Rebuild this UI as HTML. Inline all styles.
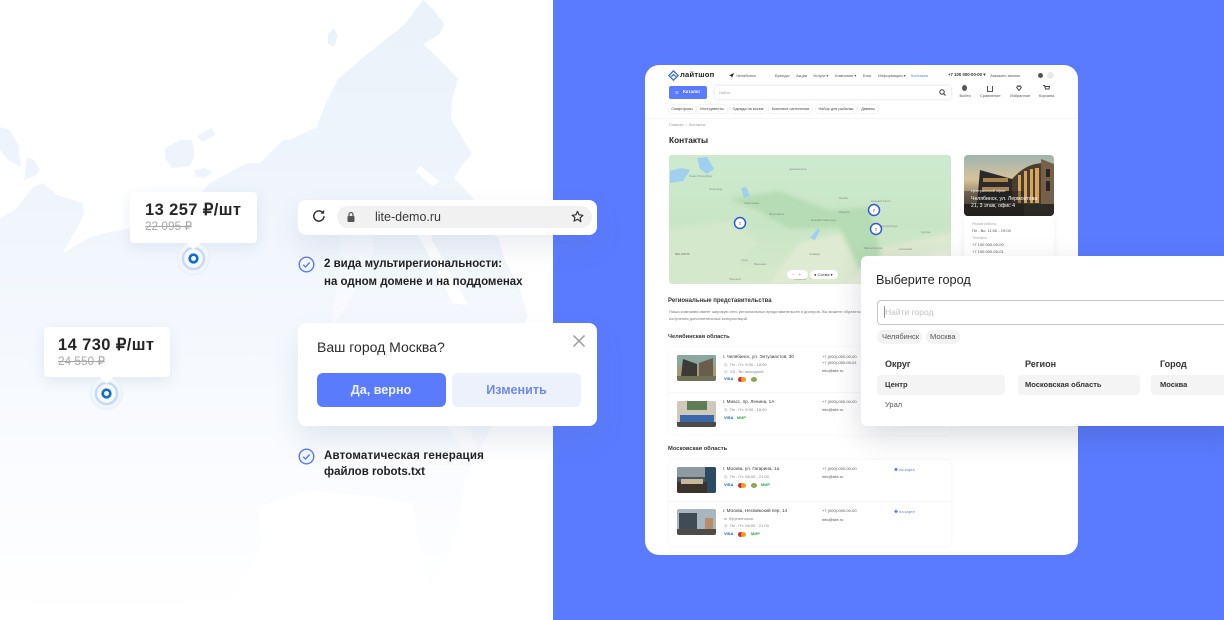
<!DOCTYPE html>
<html lang="ru"><head><meta charset="utf-8"><title>Лайтшоп</title>
<style>
html,body{margin:0;padding:0;background:#fff}
#r{position:relative;width:1224px;height:620px;overflow:hidden;background:#fff;font-family:"Liberation Sans","Noto Sans CJK SC",sans-serif;color:#1c1c1c}
#r div,#r span.t{position:absolute}
.t{white-space:nowrap;line-height:1}
.card{background:#fff;border-radius:8px}
.xs{font-size:4px;color:#555}
.s5{font-size:4.6px;color:#333}
.chip{background:#fff;border-radius:3px;box-shadow:0 0 2px rgba(0,0,0,.14);height:8px;top:105px;font-size:3.8px;line-height:8px;text-align:center;color:#444;overflow:hidden}
</style></head><body>
<div id="r">
<svg style="position:absolute;left:0;top:0" width="552" height="620" viewBox="0 0 552 620">
<defs><linearGradient id="g" gradientUnits="userSpaceOnUse" x1="0" y1="0" x2="0" y2="620">
<stop offset="0" stop-color="#eaf2fa"/><stop offset=".32" stop-color="#f0f5fc"/><stop offset=".56" stop-color="#f5f9fe"/><stop offset=".8" stop-color="#fbfcff"/><stop offset="1" stop-color="#fff"/></linearGradient></defs>
<g fill="url(#g)">
<path d="M0,218L15,210 33,187 43,183 57,195 83,203 84,213 80,223 63,253 90,237 110,232 133,228 165,215 190,205 210,183 230,172 247,163 260,163 283,140 292,139 317,127 325,105 338,79 360,60 380,44 405,24 423,0 432,8 444,24 440,34 423,44 440,60 458,79 452,100 451,119 462,137 472,154 462,165 454,178 470,195 493,222 505,260 520,290 528,317 515,340 510,400 490,430 465,480 458,530 430,594 418,540 413,503 380,498 310,490 257,507 262,540 250,570 230,600 150,610 60,612 0,600Z"/>
<path d="M0,127L10,130 18,145 21,167 8,160 0,150Z"/>
<path d="M27,157L34,160 40,170 35,176 24,180Z"/>
<path d="M165,148L180,140 192,140 195,155 190,166 172,168 165,158Z"/>
<path d="M197,136L212,128 215,135 202,142Z"/>
<path d="M194,170L204,168 213,172 205,178 196,177Z"/>
<path d="M328,34L334,28 338,36 334,47 328,44Z"/>
</g>
<g fill="#fff">
<path d="M412,200L426,205 432,240 452,275 468,305 452,303 436,268 416,232Z"/>
<path d="M470,212L490,208 515,228 508,243 482,228Z"/>
<path d="M340,238L370,232 375,250 350,300 330,330 340,270Z" opacity=".35"/>
<path d="M420,166L440,182 432,186 416,172Z"/>
<path d="M440,400L470,430 486,470 476,472 450,430 432,405Z" opacity=".7"/>
</g>
</svg>

<!-- blue panel -->
<div style="left:552.500px;top:0;width:672px;height:620px;background:#5a7bff"></div>

<!-- price tags -->
<div class="card" style="left:130px;top:192px;width:127px;height:51px;border-radius:4px;box-shadow:0 4px 14px rgba(120,140,180,.16)"></div>
<svg style="position:absolute;left:174px;top:239px" width="40" height="40"><circle cx="19.500" cy="19.500" r="16" fill="#f1f5fc" stroke="#e6eefa"/><circle cx="19.500" cy="19.500" r="10.500" fill="#f8faff" stroke="#c8daf3" stroke-width="2.500"/><circle cx="19.500" cy="19.500" r="3.800" fill="#fff" stroke="#0e6fcb" stroke-width="2.700"/></svg>
<div style="left:189px;top:239px;width:9px;height:9px;background:#fff;transform:rotate(45deg)"></div>
<span class="t" style="left:145px;top:202px;font-size:16.500px;font-weight:700;color:#262626;letter-spacing:.4px">13 257 ₽/шт</span>
<span class="t" style="left:145px;top:221px;font-size:11.800px;color:#a8a8a8;text-decoration:line-through">22 095 ₽</span>
<div class="card" style="left:44px;top:327px;width:126px;height:50px;border-radius:4px;box-shadow:0 4px 14px rgba(120,140,180,.16)"></div>
<svg style="position:absolute;left:87px;top:374px" width="40" height="40"><circle cx="19.500" cy="19.500" r="16" fill="#f1f5fc" stroke="#e6eefa"/><circle cx="19.500" cy="19.500" r="10.500" fill="#f8faff" stroke="#c8daf3" stroke-width="2.500"/><circle cx="19.500" cy="19.500" r="3.800" fill="#fff" stroke="#0e6fcb" stroke-width="2.700"/></svg>
<div style="left:102px;top:373px;width:9px;height:9px;background:#fff;transform:rotate(45deg)"></div>
<span class="t" style="left:58px;top:337px;font-size:16.500px;font-weight:700;color:#262626;letter-spacing:.4px">14 730 ₽/шт</span>
<span class="t" style="left:58px;top:356px;font-size:11.800px;color:#a8a8a8;text-decoration:line-through">24 550 ₽</span>

<!-- browser bar -->
<div class="card" style="left:298px;top:200px;width:299px;height:35px;box-shadow:0 12px 26px rgba(90,110,150,.13)"></div>
<div style="left:337px;top:206px;width:255px;height:22px;border-radius:11px;background:#f1f1f1"></div>
<svg style="position:absolute;left:311px;top:208px" width="16" height="16" viewBox="0 0 16 16" fill="none" stroke="#333" stroke-width="1.500"><path d="M13 8.200A5.100 5.100 0 1 1 11.600 4.500"/><path d="M13.200 1.800V5.600H9.400" fill="#333" stroke="none"/></svg>
<svg style="position:absolute;left:346px;top:211px" width="10" height="12" viewBox="0 0 10 12"><rect x="1.500" y="5" width="7" height="6" rx="1" fill="#555"/><path d="M3 5V3.500a2 2 0 0 1 4 0V5" fill="none" stroke="#555" stroke-width="1.200"/></svg>
<span class="t" style="left:375px;top:211px;font-size:12.500px;color:#3a3a3a">lite-demo.ru</span>
<svg style="position:absolute;left:571px;top:210px" width="13" height="13" viewBox="0 0 24 24" fill="none" stroke="#333" stroke-width="2.200" stroke-linejoin="round"><path d="M12 2.500l3 6.400 7 .9-5.100 4.800 1.300 6.900L12 17.100l-6.200 3.400 1.300-6.900L2 9.800l7-.9z"/></svg>

<!-- bullets -->
<svg style="position:absolute;left:298px;top:256px" width="17" height="17" viewBox="0 0 17 17" fill="none" stroke="#5a7bf0" stroke-width="1.400"><circle cx="8.500" cy="8.500" r="7.300" fill="#f2f6ff"/><path d="M5.200 8.700l2.300 2.300 4.200-4.500"/></svg>
<span class="t" style="left:324px;top:259px;font-size:11.500px;font-weight:700;color:#222">2 вида мультирегиональности:</span>
<span class="t" style="left:324px;top:277px;font-size:11.500px;font-weight:700;color:#222">на одном домене и на поддоменах</span>
<svg style="position:absolute;left:298px;top:448px" width="17" height="17" viewBox="0 0 17 17" fill="none" stroke="#5a7bf0" stroke-width="1.400"><circle cx="8.500" cy="8.500" r="7.300" fill="#f2f6ff"/><path d="M5.200 8.700l2.300 2.300 4.200-4.500"/></svg>
<span class="t" style="left:324px;top:451px;font-size:11.500px;font-weight:700;color:#222;letter-spacing:.2px">Автоматическая генерация</span>
<span class="t" style="left:324px;top:467px;font-size:11.500px;font-weight:700;color:#222">файлов robots.txt</span>

<!-- city question -->
<div class="card" style="left:298px;top:323px;width:299px;height:103px;box-shadow:0 14px 28px rgba(90,110,150,.14)"></div>
<span class="t" style="left:317px;top:340px;font-size:14px;color:#2b2b2b">Ваш город Москва?</span>
<svg style="position:absolute;left:572px;top:334px" width="14" height="14" fill="none" stroke="#999" stroke-width="1.500"><path d="M1.500 1.500l11 11M12.500 1.500l-11 11"/></svg>
<div style="left:317px;top:373px;width:128.500px;height:34px;border-radius:6px;background:#5a7bfb"></div>
<span class="t" style="left:317px;top:383.500px;width:128px;text-align:center;font-size:12.600px;font-weight:700;color:#eef2ff">Да, верно</span>
<div style="left:452px;top:373px;width:129px;height:34px;border-radius:6px;background:#edf1fc"></div>
<span class="t" style="left:452px;top:383.500px;width:129px;text-align:center;font-size:12.600px;font-weight:700;color:#6f8ae2">Изменить</span>

<!-- screenshot card -->
<div style="left:645px;top:65px;width:433px;height:490px;background:#fff;border-radius:14px;overflow:hidden;filter:blur(.3px)">
<div style="left:-645px;top:-65px;width:1224px;height:620px">
<!-- header -->
<svg style="position:absolute;left:668px;top:70px" width="11" height="11" viewBox="0 0 11 11" fill="none" stroke="#3f6fd8" stroke-width="1.300"><path d="M5.500.8L10.200 5.500 5.500 10.200.8 5.500Z"/><path d="M3.300 6.500L5.500 4.500 7.700 6.500"/></svg>
<span class="t" style="left:680px;top:71px;font-size:7.600px;font-weight:700;color:#222;letter-spacing:.2px">лайтшоп</span>
<svg style="position:absolute;left:729px;top:72.500px" width="5" height="5"><path d="M0 2.500L5 0 3 5 2.300 3Z" fill="#222"/></svg>
<span class="t xs" style="left:736px;top:73.500px">Челябинск</span>
<span class="t xs" style="left:775px;top:73.500px">Бренды</span><span class="t xs" style="left:796px;top:73.500px">Акции</span><span class="t xs" style="left:813px;top:73.500px">Услуги ▾</span><span class="t xs" style="left:835px;top:73.500px">Компания ▾</span><span class="t xs" style="left:863px;top:73.500px">Блог</span><span class="t xs" style="left:878px;top:73.500px">Информация ▾</span><span class="t xs" style="left:911px;top:73.500px;color:#5a7bff">Контакты</span>
<span class="t" style="left:948px;top:73px;font-size:4.300px;font-weight:700;color:#333">+7 100 000-00-00 ▾</span><span class="t xs" style="left:990px;top:73.500px">Заказать звонок</span>
<div style="left:1038px;top:73px;width:5px;height:5px;border-radius:50%;background:#555"></div>
<div style="left:1047px;top:72px;width:7px;height:7px;border-radius:50%;background:#e9e9e9"></div>
<div style="left:669px;top:86px;width:38px;height:13px;background:#5a7bff;border-radius:2px"></div>
<span class="t" style="left:675px;top:90.500px;font-size:4px;color:#fff">☰</span><span class="t" style="left:683px;top:90px;font-size:4.500px;color:#fff;font-weight:700">Каталог</span>
<div style="left:715px;top:86px;width:236px;height:13px;border-radius:2px;box-shadow:0 0 3px rgba(0,0,0,.15)"></div>
<span class="t xs" style="left:719px;top:90.500px;color:#aaa">Найти</span>
<svg style="position:absolute;left:939px;top:89px" width="7" height="7" fill="none" stroke="#333"><circle cx="3" cy="3" r="2.200"/><path d="M4.700 4.700L6.500 6.500"/></svg>
<div style="left:962px;top:85px;width:5px;height:6px;border-radius:50%;background:#555"></div>
<div style="left:987px;top:86px;width:4px;height:5px;border:1px solid #555;border-width:0 1px 1px 1px"></div>
<svg style="position:absolute;left:1016px;top:85px" width="6" height="6" fill="none" stroke="#444"><path d="M3 5.500L.7 2.500 1.700 .8 3 1.500 4.300 .8 5.300 2.500Z"/></svg>
<svg style="position:absolute;left:1043px;top:85px" width="7" height="6" fill="none" stroke="#444"><path d="M0 .5H1.500L2.500 4H6L6.500 1.500H2"/></svg>
<span class="t xs" style="left:959.500px;top:94px">Войти</span><span class="t xs" style="left:980px;top:94px">Сравнение</span><span class="t xs" style="left:1010px;top:94px">Избранное</span><span class="t xs" style="left:1039px;top:94px">Корзина</span>
<div class="chip" style="left:669px;width:26px">Смартфоны</div><div class="chip" style="left:697px;width:30px">Инструменты</div><div class="chip" style="left:730px;width:36px">Одежда на восем</div><div class="chip" style="left:769px;width:43px">Комплект сантехники</div><div class="chip" style="left:816px;width:40px">Набор для рыбалки</div><div class="chip" style="left:858px;width:20px">Диваны</div>
<div style="left:645px;top:118px;width:433px;height:1px;background:#f5f5f5"></div>
<span class="t" style="left:669px;top:124px;font-size:3.800px;color:#999">Главная &nbsp;›&nbsp; Контакты</span>
<span class="t" style="left:669px;top:136px;font-size:8.300px;font-weight:700;color:#222">Контакты</span>

<!-- map -->
<svg style="position:absolute;left:669px;top:155px;border-radius:3px" width="282" height="129" viewBox="0 0 282 129">
<defs><linearGradient id="m" x1="0" y1="0" x2="0" y2="1"><stop offset="0" stop-color="#cdeacf"/><stop offset=".55" stop-color="#c8e6c5"/><stop offset="1" stop-color="#d8e8cc"/></linearGradient><filter id="f"><feGaussianBlur stdDeviation="2.500"/></filter></defs>
<rect width="282" height="129" fill="url(#m)"/>
<g filter="url(#f)">
<path d="M100,129L130,88 180,76 215,92 282,78V129Z" fill="#dfead2"/>
<path d="M175,129L205,112 282,95V129Z" fill="#ecefdf"/>
<path d="M60,44L110,36 160,55 200,52 212,100 190,115 170,72 120,74 90,56Z" fill="#b5dcb4"/>
<path d="M0,74L60,66 90,88 60,120 0,129Z" fill="#d4e8cc"/>
</g>
<g fill="#a0cff0">
<path d="M28,3L38,2 45,14 38,19 31,14Z"/>
<path d="M1,16L12,13 21,15 14,26 1,28Z"/>
<path d="M72,33L77,32 81,41 75,43Z"/>
<path d="M141,83L149,73 151,75 146,85Z"/>
</g>
<g fill="#666" fill-opacity=".7" font-size="3" font-family="Liberation Sans,sans-serif">
<text x="20" y="22">Санкт-Петербург</text><text x="40" y="35">Новгород</text><text x="75" y="49">Череповец</text><text x="202" y="47">Нижний Тагил</text><text x="170" y="44">Пермь</text><text x="6" y="100" font-weight="700">BELARUS</text><text x="100" y="60">Ярославль</text><text x="142" y="66">Нижний Новгород</text><text x="72" y="106">Тула</text><text x="170" y="58">Ижевск</text><text x="210" y="72">Екатеринбург</text><text x="252" y="78">Курган</text><text x="195" y="94">Магнитогорск</text><text x="230" y="95">Костанай</text><text x="140" y="100">Самара</text><text x="85" y="110">Воронеж</text><text x="60" y="125">Харьков</text><text x="125" y="125">Саратов</text><text x="120" y="15">Архангельск</text></g>
</svg>
<svg style="position:absolute;left:732px;top:215px" width="16" height="16"><circle cx="8" cy="8" r="5.500" fill="#fff" stroke="#2f58d8" stroke-width="1.500"/><text x="8" y="9.500" font-size="4" text-anchor="middle" fill="#333">2</text></svg>
<svg style="position:absolute;left:866px;top:202px" width="16" height="16"><circle cx="8" cy="8" r="5.500" fill="#fff" stroke="#2f58d8" stroke-width="1.500"/><text x="8" y="9.500" font-size="4" text-anchor="middle" fill="#333">2</text></svg>
<svg style="position:absolute;left:868px;top:221px" width="16" height="16"><circle cx="8" cy="8" r="5.500" fill="#fff" stroke="#2f58d8" stroke-width="1.500"/><text x="8" y="9.500" font-size="4" text-anchor="middle" fill="#333">2</text></svg>
<div style="left:787px;top:270px;width:21px;height:9px;border-radius:5px;background:#fff"></div>
<span class="t xs" style="left:792px;top:272.500px">−&nbsp;&nbsp;&nbsp;&nbsp;+</span>
<div style="left:810px;top:270px;width:28px;height:9px;border-radius:5px;background:#fff"></div>
<span class="t xs" style="left:814px;top:272.500px;color:#333">● Схема ▾</span>

<!-- side office -->
<svg style="position:absolute;left:964px;top:155px;border-radius:4px" width="90" height="61" viewBox="0 0 90 61">
<defs><linearGradient id="sk" x1="0" y1="0" x2="0" y2="1"><stop offset="0" stop-color="#9fb4b0"/><stop offset=".4" stop-color="#d6c39a"/><stop offset=".7" stop-color="#8a7a5f"/><stop offset="1" stop-color="#3a3a30"/></linearGradient></defs>
<rect width="90" height="61" fill="url(#sk)"/>
<path d="M16,15L48,24V48H13Z" fill="#2c2a2c"/>
<path d="M48,24L52,20C60,12 68,9 78,8V50H48Z" fill="#4a3d2e"/>
<path d="M77,4L90,9V50H77Z" fill="#75604c"/>
<g fill="#d6a45a"><rect x="19" y="23" width="25" height="4" opacity=".75"/><rect x="18" y="32" width="27" height="4" opacity=".75"/><rect x="54" y="20" width="3" height="28"/><rect x="60" y="16" width="3" height="32"/><rect x="66" y="14" width="3" height="34"/><rect x="71" y="13" width="4" height="35"/></g>
<g fill="#2b2622"><rect x="82" y="14" width="4" height="8"/><rect x="82" y="26" width="4" height="10"/></g>
<rect y="49" width="90" height="12" fill="#2b2a24"/>
<path d="M0,36H60V61H0Z" fill="#141414" opacity=".35"/>
</svg>
<span class="t" style="left:971px;top:190px;font-size:3.800px;color:#eee">Центральный офис</span>
<span class="t" style="left:971px;top:197px;font-size:5.200px;color:#fff">Челябинск, ул. Лермонтова</span>
<span class="t" style="left:971px;top:204px;font-size:5.200px;color:#fff">21, 3 этаж, офис 4</span>
<div style="left:964px;top:216px;width:90px;height:50px;box-shadow:0 2px 6px rgba(0,0,0,.07)"></div>
<span class="t" style="left:972px;top:223px;font-size:3.600px;color:#aaa">Режим работы</span>
<span class="t xs" style="left:972px;top:229px">Пн - Вс: 11:00 - 19:00</span>
<span class="t" style="left:972px;top:237px;font-size:3.600px;color:#aaa">Телефон</span>
<span class="t xs" style="left:972px;top:243px">+7 100 000-00-00</span>
<span class="t xs" style="left:972px;top:250px">+7 100 000-00-01</span>

<!-- regions -->
<span class="t" style="left:668px;top:298px;font-size:6px;font-weight:700;color:#333">Региональные представительства</span>
<span class="t" style="left:669px;top:309.500px;font-size:4px;color:#777">Наша компания имеет широкую сеть региональных представительств и дилеров. Вы можете обратиться в любой из них для</span>
<span class="t" style="left:669px;top:317px;font-size:4px;color:#777">получения дополнительных консультаций.</span>
<span class="t" style="left:668px;top:335px;font-size:5.700px;font-weight:700;color:#333">Челябинская область</span>
<div style="left:669px;top:347px;width:282px;height:88px;box-shadow:0 0 3px rgba(0,0,0,.05);border-radius:3px"></div>
<div style="left:669px;top:392px;width:282px;height:1px;background:#f6f6f6"></div>

<svg style="position:absolute;left:677px;top:355px;border-radius:2px" width="39" height="26"><rect width="39" height="26" fill="#a49a7c"/><rect width="39" height="11" fill="#8aa7a0"/><path d="M6,4L20,9V22H4Z" fill="#3b3a36"/><path d="M22,8L36,3V22H22Z" fill="#6b5d4c"/><rect y="21" width="39" height="5" fill="#6f7256"/></svg>
<span class="t s5" style="left:723px;top:355px">г. Челябинск, ул. Энтузиастов, 30</span>
<span class="t xs" style="left:724px;top:363px;color:#888">◷&nbsp; Пн - Пт: 9:00 - 18:00</span>
<span class="t xs" style="left:724px;top:369.500px;color:#888">◷&nbsp; Сб - Вс: выходной</span>
<span class="t" style="left:724px;top:377px;font-size:4px;font-weight:700;color:#1a5fb4">VISA</span>
<div style="left:738px;top:377px;width:5px;height:5px;border-radius:50%;background:#e0262c"></div><div style="left:741px;top:377px;width:5px;height:5px;border-radius:50%;background:#f49f1c"></div>
<div style="left:751px;top:377px;width:6px;height:5px;border-radius:50%;background:#8da84e"></div>
<span class="t xs" style="left:822px;top:355px">+7 (000)-000-00-00</span><span class="t xs" style="left:822px;top:360.500px">+7 (000)-000-00-01</span><span class="t xs" style="left:822px;top:369px">info@site.ru</span>

<svg style="position:absolute;left:677px;top:401px;border-radius:2px" width="39" height="26"><rect width="39" height="26" fill="#cfc9bd"/><rect x="10" y="0" width="20" height="9" fill="#5f7d52"/><rect x="3" y="14" width="34" height="8" fill="#3a68a8"/><rect y="21" width="39" height="5" fill="#4a4a4a"/></svg>
<span class="t s5" style="left:723px;top:399.500px">г. Миасс, пр. Ленина, 1А</span>
<span class="t xs" style="left:724px;top:407.500px;color:#888">◷&nbsp; Пн - Пт: 9:00 - 18:00</span>
<span class="t" style="left:724px;top:416px;font-size:4px;font-weight:700;color:#1a5fb4">VISA</span><span class="t" style="left:737px;top:416px;font-size:4px;font-weight:700;color:#2ba14b">МИР</span>
<span class="t xs" style="left:822px;top:400px">+7 (000)-000-00-00</span><span class="t xs" style="left:822px;top:408px">info@site.ru</span>

<span class="t" style="left:668px;top:447px;font-size:5.800px;font-weight:700;color:#333">Московская область</span>
<div style="left:669px;top:460px;width:282px;height:86px;box-shadow:0 0 3px rgba(0,0,0,.06);border-radius:3px"></div>
<div style="left:669px;top:501px;width:282px;height:1px;background:#f6f6f6"></div>

<svg style="position:absolute;left:677px;top:467px;border-radius:2px" width="39" height="26"><rect width="39" height="26" fill="#4a5660"/><rect x="0" y="0" width="28" height="10" fill="#8d9aa0"/><rect x="28" width="11" height="26" fill="#2d4a63"/><rect y="15" width="30" height="11" fill="#3a332b"/><rect x="4" y="12" width="22" height="5" fill="#c8b79b"/></svg>
<span class="t s5" style="left:723px;top:467px">г. Москва, ул. Гагарина, 1а</span>
<span class="t xs" style="left:724px;top:475px;color:#888">◷&nbsp; Пн - Пт: 08:00 - 21:00</span>
<span class="t" style="left:724px;top:483px;font-size:4px;font-weight:700;color:#1a5fb4">VISA</span>
<div style="left:738px;top:483px;width:5px;height:5px;border-radius:50%;background:#e0262c"></div><div style="left:741px;top:483px;width:5px;height:5px;border-radius:50%;background:#f49f1c"></div>
<div style="left:751px;top:483px;width:6px;height:5px;border-radius:50%;background:#8da84e"></div>
<span class="t" style="left:761px;top:483px;font-size:4px;font-weight:700;color:#2ba14b">МИР</span>
<span class="t xs" style="left:822px;top:467px">+7 (000)-000-00-00</span><span class="t xs" style="left:822px;top:475px">info@site.ru</span>
<span class="t xs" style="left:894px;top:468px;color:#5a7bff">◆ на карте</span>

<svg style="position:absolute;left:677px;top:509px;border-radius:2px" width="39" height="26"><rect width="39" height="26" fill="#a9b6c0"/><rect x="2" y="4" width="18" height="17" fill="#3f4c55"/><rect x="28" y="9" width="8" height="12" fill="#b78d6a"/><rect y="20" width="39" height="6" fill="#4d4c48"/></svg>
<span class="t s5" style="left:723px;top:509px">г. Москва, Несвижский пер, 14</span>
<span class="t xs" style="left:724px;top:517px;color:#888">м&nbsp; Фрунзенская</span>
<span class="t xs" style="left:724px;top:524px;color:#888">◷&nbsp; Пн - Пт: 08:00 - 21:00</span>
<span class="t" style="left:724px;top:532px;font-size:4px;font-weight:700;color:#1a5fb4">VISA</span>
<div style="left:738px;top:532px;width:5px;height:5px;border-radius:50%;background:#e0262c"></div><div style="left:741px;top:532px;width:5px;height:5px;border-radius:50%;background:#f49f1c"></div>
<span class="t" style="left:751px;top:532px;font-size:4px;font-weight:700;color:#2ba14b">МИР</span>
<span class="t xs" style="left:822px;top:509px">+7 (000)-000-00-00</span><span class="t xs" style="left:822px;top:518px">info@site.ru</span>
<span class="t xs" style="left:894px;top:510px;color:#5a7bff">◆ на карте</span>
</div></div>

<!-- modal -->
<div style="left:861px;top:256px;width:380px;height:170px;background:#fff;border-radius:6px;box-shadow:0 10px 30px rgba(40,50,70,.18)"></div>
<span class="t" style="left:876px;top:274px;font-size:12.700px;color:#262626">Выберите город</span>
<div style="left:877px;top:300px;width:360px;height:23px;border:1px solid #c4c4c4;border-radius:4px;box-sizing:content-box"></div>
<div style="left:884px;top:306px;width:1px;height:12px;background:#999"></div>
<span class="t" style="left:885px;top:308px;font-size:8.500px;color:#c2c2c2">Найти город</span>
<div style="left:877px;top:330px;width:45px;height:14px;border-radius:7px;background:#f3f3f3"></div>
<span class="t" style="left:882px;top:333px;font-size:7.500px;color:#555">Челябинск</span>
<div style="left:926px;top:330px;width:34px;height:14px;border-radius:7px;background:#f3f3f3"></div>
<span class="t" style="left:930px;top:333px;font-size:7.500px;color:#555">Москва</span>
<span class="t" style="left:885px;top:360px;font-size:9px;font-weight:700;color:#333">Округ</span>
<span class="t" style="left:1025px;top:360px;font-size:9px;font-weight:700;color:#333">Регион</span>
<span class="t" style="left:1160px;top:360px;font-size:9px;font-weight:700;color:#333">Город</span>
<div style="left:877px;top:375px;width:128px;height:20px;border-radius:4px;background:#f4f4f4"></div>
<div style="left:1018px;top:375px;width:122px;height:20px;border-radius:4px;background:#f4f4f4"></div>
<div style="left:1151px;top:375px;width:90px;height:20px;border-radius:4px;background:#f4f4f4"></div>
<span class="t" style="left:885px;top:381px;font-size:7.500px;font-weight:700;color:#333">Центр</span>
<span class="t" style="left:1025px;top:381px;font-size:7.500px;font-weight:700;color:#333">Московская область</span>
<span class="t" style="left:1160px;top:381px;font-size:7.500px;font-weight:700;color:#333">Москва</span>
<span class="t" style="left:885px;top:401px;font-size:7.500px;color:#555">Урал</span>
</div>
</body></html>
